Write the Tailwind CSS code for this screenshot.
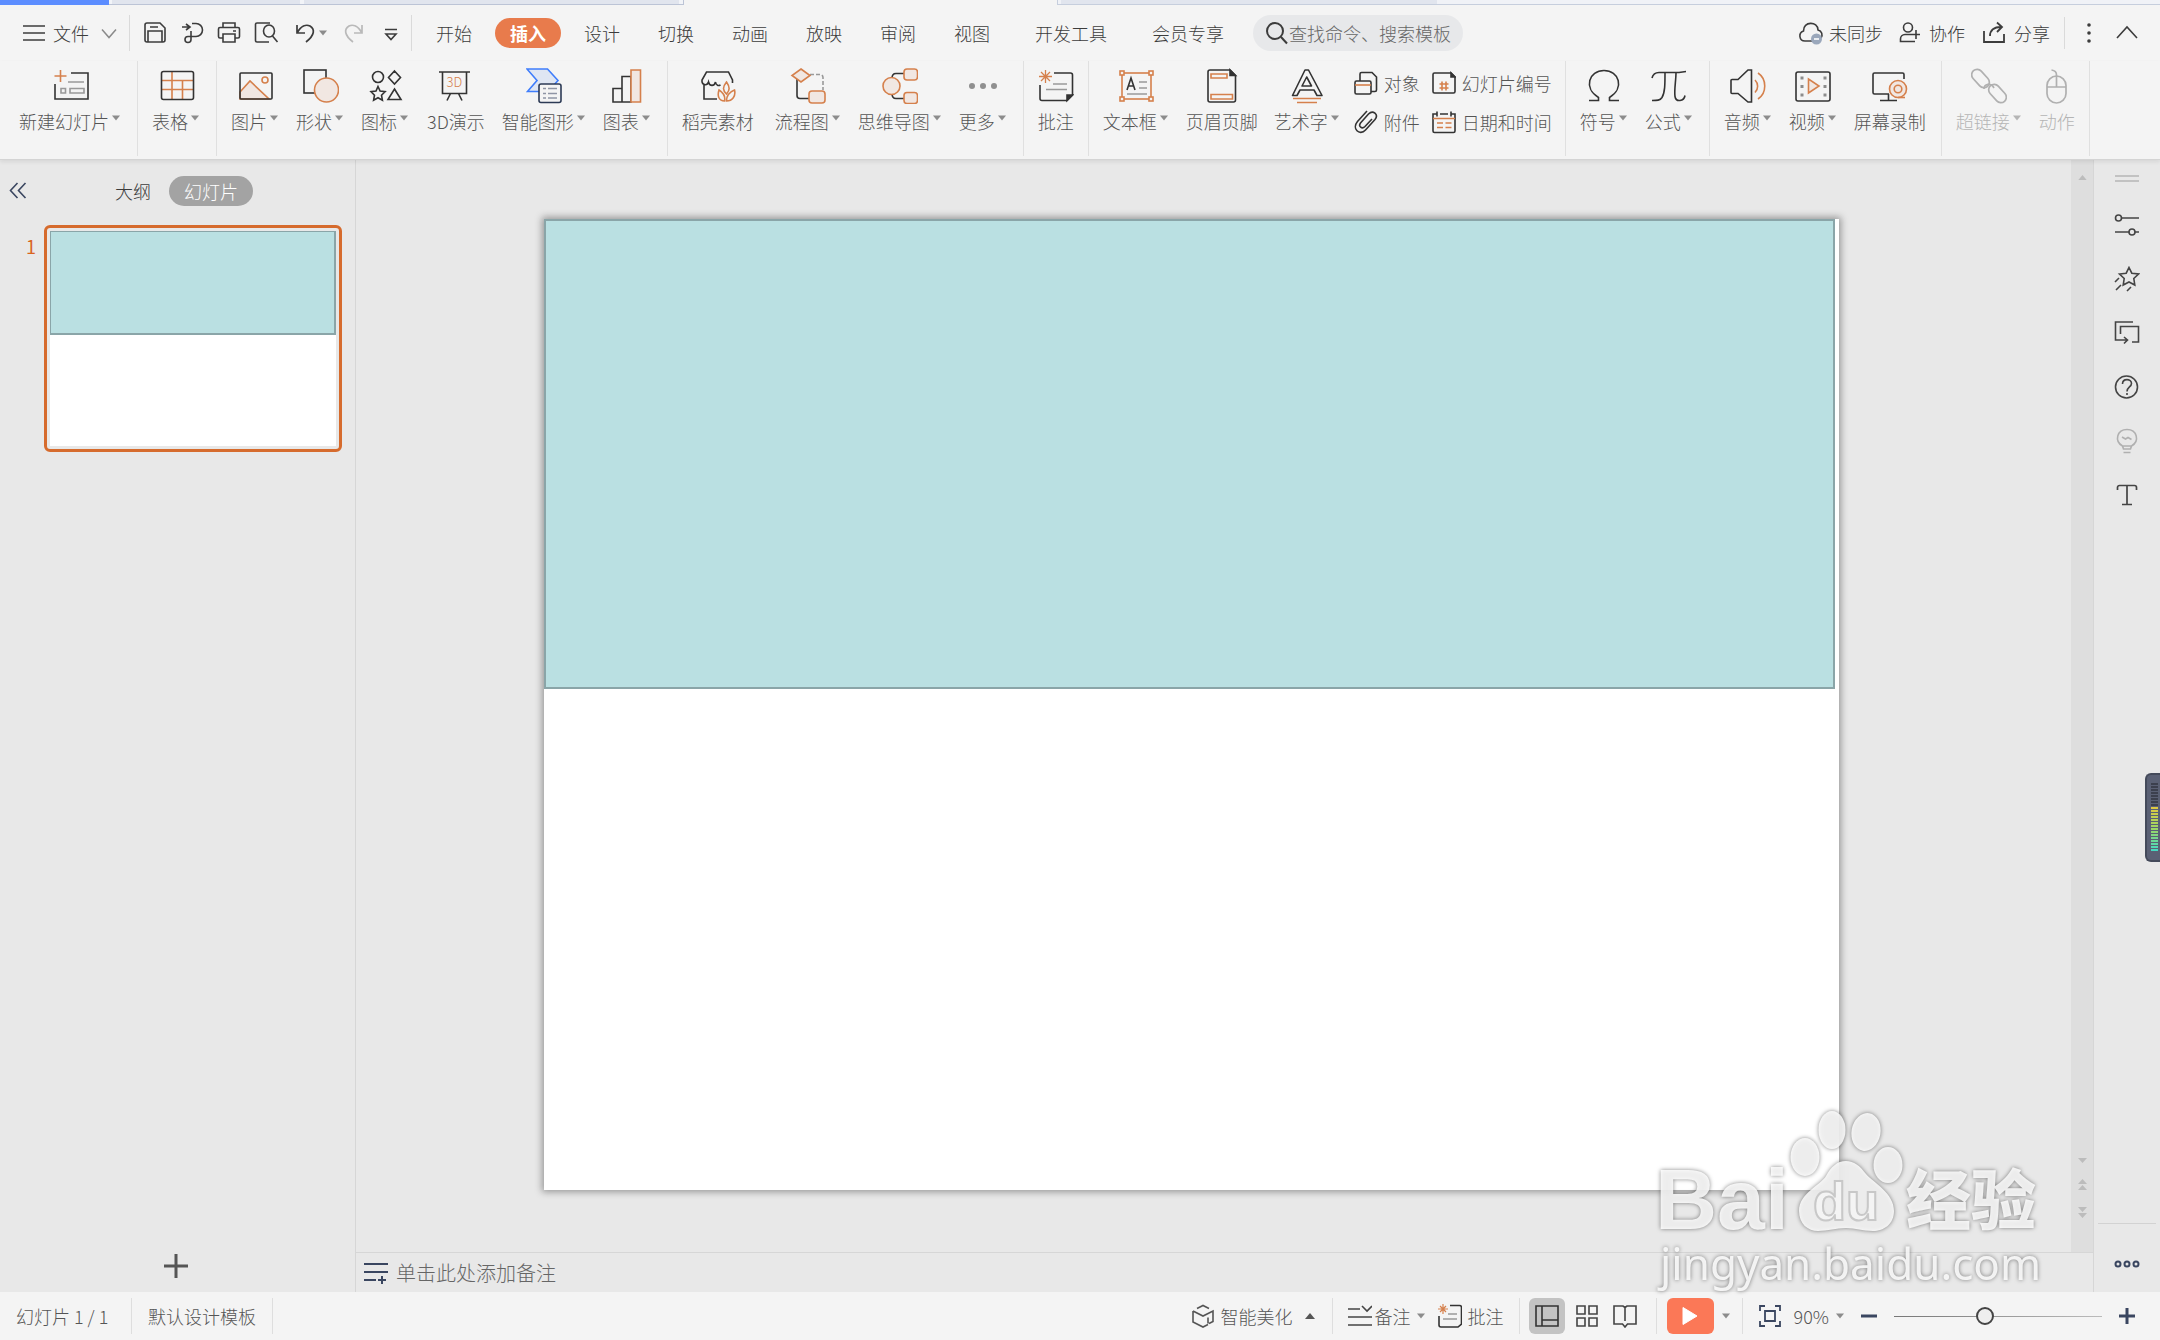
<!DOCTYPE html>
<html lang="zh-CN">
<head>
    <meta charset="UTF-8">
    <meta name="viewport" content="width=device-width, initial-scale=1.0">
    <title>演示文稿</title>
    <script src="https://cdn.jsdelivr.net/npm/@tailwindcss/browser@4"></script>
</head>
<body class="flex min-h-screen flex-col bg-[#f4f4f4] font-['Noto_Sans_CJK_SC',sans-serif] text-lg/6 font-light text-[#3c3c3c]">

    <!-- shared symbols -->
    <svg class="hidden">
        <symbol id="down" viewBox="0 0 8 6"><path d="M0 0.5h8L4 5.5z" fill="#8c8c8c"/></symbol>
        <symbol id="up" viewBox="0 0 10 6"><path d="M0 6h10L5 0z" fill="currentColor"/></symbol>
    </svg>

    <!-- document tab strip -->
    <div class="flex h-[5px] shrink-0">
        <div class="w-[109px] bg-[#5c8dff]"></div>
        <div class="flex w-[575px] gap-1 border-r border-b border-[#bcc4d6] bg-[#f2f4f8] pr-1 pl-[3px]">
            <div class="w-[188px] bg-[#e1e5ee]"></div>
            <div class="flex-1 bg-[#e1e5ee]"></div>
        </div>
        <div class="w-[373px]"></div>
        <div class="flex flex-1 border-b border-l border-[#c6cedd] bg-[#f0f2f7] pl-[3px]">
            <div class="w-[376px] bg-[#e1e5ee]"></div>
        </div>
    </div>

    <!-- menu row -->
    <header class="flex h-14 shrink-0 items-center pr-[21px] whitespace-nowrap">
        <button class="flex items-center pl-[22px]">
            <svg class="h-5 w-6" viewBox="0 0 24 20" fill="none" stroke="#3c3c3c" stroke-width="1.6"><path d="M1 3h22M1 10h22M1 17h22"/></svg>
            <span class="ml-[7px]">文件</span>
            <svg class="ml-3 h-4 w-4" viewBox="0 0 16 16" fill="none" stroke="#8a8a8a" stroke-width="1.5"><path d="M1 4.500l7 8 7-8"/></svg>
        </button>
        <div class="ml-3 flex h-9 items-center gap-[11px] border-x border-[#dadada] pr-3 pl-3">
            <button aria-label="保存"><svg class="h-6 w-[26px]" viewBox="0 0 26 24" fill="none" stroke="#3c3c3c" stroke-width="1.6"><path d="M5 2h13l5 5v12a2 2 0 0 1-2 2H5a2 2 0 0 1-2-2V4a2 2 0 0 1 2-2zM6 21V10h14v11M8 6h8"/></svg></button>
            <button aria-label="输出"><svg class="h-6 w-[26px]" viewBox="0 0 26 24" fill="none" stroke="#3c3c3c" stroke-width="1.6"><path d="M3 6h7M7 3l4 3-4 3M13 2.500h4a6 6 0 0 1 0 13H9a3 3 0 1 0 3 3V10"/></svg></button>
            <button aria-label="打印"><svg class="h-6 w-[26px]" viewBox="0 0 26 24" fill="none" stroke="#3c3c3c" stroke-width="1.6"><path d="M7 6V2h12v4M7 17H4a1.500 1.500 0 0 1-1.500-1.500V8A1.500 1.500 0 0 1 4 6.500h18A1.500 1.500 0 0 1 23.500 8v7.500A1.500 1.500 0 0 1 22 17h-3M7 13h12v8H7zM17 10h3"/></svg></button>
            <button aria-label="打印预览"><svg class="h-6 w-[26px]" viewBox="0 0 26 24" fill="none" stroke="#3c3c3c" stroke-width="1.600"><path d="M17 2H4a1.500 1.500 0 0 0-1.500 1.500v16A1.500 1.500 0 0 0 4 21h12M19.500 15l5 6"/><ellipse cx="16" cy="10" rx="5.500" ry="6"/></svg></button>
            <button class="ml-[3px] flex items-center gap-1" aria-label="撤销"><svg class="h-6 w-[26px]" viewBox="0 0 26 24" fill="none" stroke="#3c3c3c" stroke-width="1.700"><path d="M4 4v8h8M4 12C8 5 13 3 17 5c5 3 5 9-4 16"/></svg><svg class="-ml-1 h-[6px] w-2"><use href="#down"/></svg></button>
            <button class="ml-1" aria-label="恢复" disabled><svg class="h-6 w-[26px]" viewBox="0 0 26 24" fill="none" stroke="#b9b9b9" stroke-width="1.700"><path d="M20 4v8h-8M20 12C16 5 11 3 7 5c-5 3-5 9 4 16"/></svg></button>
            <button class="ml-1" aria-label="自定义"><svg class="h-6 w-4" viewBox="0 0 16 24" fill="none" stroke="#3c3c3c" stroke-width="1.600"><path d="M2 8.500h12M3 13h10l-5 5.500z"/></svg></button>
        </div>
        <nav class="ml-[5px] flex items-center">
            <button class="px-[19px]">开始</button>
            <button class="mx-1 h-[30px] rounded-full bg-[#e87b4c] px-[15px] font-bold text-white">插入</button>
            <button class="px-[19px]">设计</button>
            <button class="px-[19px]">切换</button>
            <button class="px-[19px]">动画</button>
            <button class="px-[19px]">放映</button>
            <button class="px-[19px]">审阅</button>
            <button class="px-[19px]">视图</button>
            <button class="ml-[7px] px-[19px]">开发工具</button>
            <button class="ml-[7px] px-[19px]">会员专享</button>
        </nav>
        <label class="ml-[10px] flex h-9 w-[210px] items-center rounded-full bg-[#e7e8ea] pl-3">
            <svg class="h-6 w-6 shrink-0" viewBox="0 0 24 24" fill="none" stroke="#3c3c3c" stroke-width="2"><circle cx="10" cy="10" r="8"/><path d="M16 16l6 6.500"/></svg>
            <input class="w-[170px] bg-transparent font-light outline-none placeholder:text-[#666]" type="text" placeholder="查找命令、搜索模板" aria-label="搜索">
        </label>
        <div class="ml-auto flex items-center">
            <button class="flex items-center gap-[5px]">
                <svg class="h-6 w-[26px]" viewBox="0 0 26 24" fill="none" stroke="#3c3c3c" stroke-width="1.600"><path d="M14 20H7C1 20 0 12 5.500 10 5 0 20 0 20 9c4 1 5 5 3 8"/><circle cx="18.500" cy="18" r="5.500" fill="#9aa7bb" stroke="none"/><path d="M16 18h5" stroke="#fff"/></svg>
                <span>未同步</span>
            </button>
            <button class="ml-4 flex items-center gap-2">
                <svg class="h-6 w-[22px]" viewBox="0 0 22 24" fill="none" stroke="#3c3c3c" stroke-width="1.600"><circle cx="9" cy="6.500" r="4.500"/><path d="M14 13.500H6a4.500 4.500 0 0 0-4.500 4.500v2.500H16M17 9v9M13 13.500h8"/></svg>
                <span>协作</span>
            </button>
            <button class="ml-[17px] flex items-center gap-2">
                <svg class="h-6 w-6" viewBox="0 0 24 24" fill="none" stroke="#3c3c3c" stroke-width="1.800"><path d="M2 10v11h20V13M8 15c0-6 4-9 11-9M15 1.500l5 4.500-5 5"/></svg>
                <span>分享</span>
            </button>
            <button class="ml-[14px] flex h-8 w-12 items-center justify-center border-l border-[#dadada]" aria-label="更多选项">
                <svg class="h-5 w-1" viewBox="0 0 4 20" fill="#3c3c3c"><circle cx="2" cy="2" r="1.800"/><circle cx="2" cy="10" r="1.800"/><circle cx="2" cy="18" r="1.800"/></svg>
            </button>
            <button class="ml-[3px]" aria-label="收起功能区"><svg class="h-6 w-6" viewBox="0 0 24 24" fill="none" stroke="#3c3c3c" stroke-width="1.600"><path d="M2 17L12 6l10 11"/></svg></button>
        </div>
    </header>

    <!-- ribbon -->
    <section class="relative z-10 flex h-[99px] shrink-0 border-b border-[#d4d4d4] bg-[#f4f4f4] pb-[3px] pl-[5px] whitespace-nowrap text-[#555] shadow-[0_2px_4px_rgba(0,0,0,0.08)]">
        <div class="flex items-start border-r border-[#e0e0e0] pt-[7px] pr-[7px] pl-[6px]">
            <button class="flex flex-col items-center px-2">
                <svg class="size-9" viewBox="0 0 36 36" fill="none" stroke="#333" stroke-width="1.600"><path d="M18 5h17v26H2V16"/><path d="M15 14h16M8 20.500h4.500V25H8zM17 20.500h14V25H17z" stroke="#999"/><path d="M7.500 2v12M1.500 8h12" stroke="#d5804c"/></svg>
                <span class="mt-[5px] flex items-center">新建幻灯片<svg class="mr-[2px] mb-[6px] ml-[3px] h-[6px] w-2"><use href="#down"/></svg></span>
            </button>
        </div>
        <div class="flex items-start border-r border-[#e0e0e0] pt-[7px] pr-[7px] pl-[6px]">
            <button class="flex flex-col items-center px-2">
                <svg class="size-9" viewBox="0 0 36 36" fill="none" stroke="#d5804c" stroke-width="1.600"><path d="M3 12.500h31M3 21.500h31M13 4v27M23.500 12.500V31"/><rect x="2.500" y="3.500" width="32" height="28" rx="2" stroke="#333"/></svg>
                <span class="mt-[5px] flex items-center">表格<svg class="mr-[2px] mb-[6px] ml-[3px] h-[6px] w-2"><use href="#down"/></svg></span>
            </button>
        </div>
        <div class="flex items-start border-r border-[#e0e0e0] pt-[7px] pr-[7px] pl-[6px]">
            <button class="flex flex-col items-center px-2">
                <svg class="size-9" viewBox="0 0 36 36" fill="none" stroke="#d5804c" stroke-width="1.600"><path d="M2 24L12 13l19 18H2z" fill="#f1e7e2"/><circle cx="27" cy="12" r="3"/><rect x="2" y="5" width="32" height="26" rx="1" stroke="#333"/></svg>
                <span class="mt-[5px] flex items-center">图片<svg class="mr-[2px] mb-[6px] ml-[3px] h-[6px] w-2"><use href="#down"/></svg></span>
            </button>
            <button class="flex flex-col items-center px-2">
                <svg class="size-9" viewBox="0 0 36 36" fill="none" stroke-width="1.600"><rect x="1" y="2" width="22" height="23" stroke="#333"/><circle cx="23.500" cy="22" r="12" fill="#f1e7e2" stroke="#d5804c"/></svg>
                <span class="mt-[5px] flex items-center">形状<svg class="mr-[2px] mb-[6px] ml-[3px] h-[6px] w-2"><use href="#down"/></svg></span>
            </button>
            <button class="flex flex-col items-center px-2">
                <svg class="size-9" viewBox="0 0 36 36" fill="none" stroke="#333" stroke-width="1.600"><circle cx="10" cy="9" r="5.500"/><path d="M26.500 3l6 6.500-6 6.500-6-6.500zM26.500 21l6.500 10.500H20zM10 18.500l2.100 4.600 5 .6-3.600 3.500.9 5-4.400-2.500-4.400 2.500.9-5L3 23.700l5-.6z"/></svg>
                <span class="mt-[5px] flex items-center">图标<svg class="mr-[2px] mb-[6px] ml-[3px] h-[6px] w-2"><use href="#down"/></svg></span>
            </button>
            <button class="flex flex-col items-center px-[9px]">
                <svg class="size-9" viewBox="0 0 36 36" fill="none" stroke="#333" stroke-width="1.600"><path d="M1 4h31M4.500 4v21.500h24V4M12.500 25.500L9 32.500M20.500 25.500l3.500 7"/><text x="8.500" y="19" font-size="13" fill="#d5804c" stroke="none">3D</text></svg>
                <span class="mt-[5px]">3D演示</span>
            </button>
            <button class="flex flex-col items-center px-2">
                <svg class="size-9" viewBox="0 0 36 36" fill="none" stroke-width="1.600"><path d="M1 1h20.500L32 12.500 22 23.500H1.500L11 12.500z" fill="#dfe6f3" stroke="#3f7dfb"/><rect x="13" y="16" width="22" height="18.500" rx="2" fill="#f4f4f4" stroke="#2c3a55"/><path d="M17 20.500h3M22 20.500h9M17 25.500h3M22 25.500h9M17 30h3M22 30h9" stroke="#8f95a5"/></svg>
                <span class="mt-[5px] flex items-center">智能图形<svg class="mr-[2px] mb-[6px] ml-[3px] h-[6px] w-2"><use href="#down"/></svg></span>
            </button>
            <button class="flex flex-col items-center px-2">
                <svg class="size-9" viewBox="0 0 36 36" fill="none" stroke="#333" stroke-width="1.600"><path d="M4 20.500h9V34H4zM13 8.500h9V34h-9z"/><path d="M22 2h9.500v32H22z" fill="#f1e7e2" stroke="#d5804c"/></svg>
                <span class="mt-[5px] flex items-center">图表<svg class="mr-[2px] mb-[6px] ml-[3px] h-[6px] w-2"><use href="#down"/></svg></span>
            </button>
        </div>
        <div class="flex items-start border-r border-[#e0e0e0] pt-[7px] pr-[7px] pl-[6px]">
            <button class="mr-[5px] flex flex-col items-center px-2">
                <svg class="size-9" viewBox="0 0 36 36" fill="none" stroke="#333" stroke-width="1.600"><path d="M32.500 15v-3L28.500 4h-22L2 12c-.500 5 5 6.500 6.500 2 1 4.500 6 4.500 7 0 .500 3.500 3 4 5 3M4 17v14h13"/><path d="M26.500 14c-4 5-4 8 0 12 3.500-4 3.500-7 0-12zM19 22c-2 6 0 11 5.500 11 1-4-1-8-5.500-11zM34.500 22c1.500 6-2 11-8 11 0-5 3-9 8-11z" stroke="#d5804c"/></svg>
                <span class="mt-[5px]">稻壳素材</span>
            </button>
            <button class="flex flex-col items-center px-2">
                <svg class="size-9" viewBox="0 0 36 36" fill="none" stroke-width="1.600"><path d="M7 11v16.500a3 3 0 0 0 3 3h9" stroke="#333"/><path d="M20 6.500h10a3 3 0 0 1 3 3V22" stroke="#999" stroke-dasharray="4 2"/><g fill="#f1e7e2" stroke="#d5804c"><path d="M11 1l9 6.500-9 6.500-9-6.500z"/><rect x="19" y="23" width="16" height="12" rx="3"/></g></svg>
                <span class="mt-[5px] flex items-center">流程图<svg class="mr-[2px] mb-[6px] ml-[3px] h-[6px] w-2"><use href="#down"/></svg></span>
            </button>
            <button class="flex flex-col items-center px-2">
                <svg class="size-9" viewBox="0 0 36 36" fill="none" stroke-width="1.600"><path d="M22 5.500h-8c-3 0-4 1.500-4 5M22 30.500h-8c-3 0-4-1.500-4-5" stroke="#333"/><g fill="#f1e7e2" stroke="#d5804c"><circle cx="9.500" cy="18" r="8.500"/><rect x="22" y="1" width="13.500" height="11" rx="3"/><rect x="22" y="24.500" width="13.500" height="11" rx="3"/></g></svg>
                <span class="mt-[5px] flex items-center">思维导图<svg class="mr-[2px] mb-[6px] ml-[3px] h-[6px] w-2"><use href="#down"/></svg></span>
            </button>
            <button class="flex flex-col items-center px-2">
                <svg class="size-9" viewBox="0 0 36 36" fill="#8f8f8f"><circle cx="7" cy="18" r="3"/><circle cx="18" cy="18" r="3"/><circle cx="29" cy="18" r="3"/></svg>
                <span class="mt-[5px] flex items-center">更多<svg class="mr-[2px] mb-[6px] ml-[3px] h-[6px] w-2"><use href="#down"/></svg></span>
            </button>
        </div>
        <div class="flex items-start border-r border-[#e0e0e0] px-[6px] pt-[7px]">
            <button class="flex flex-col items-center px-2">
                <svg class="size-9" viewBox="0 0 36 36" fill="none" stroke="#333" stroke-width="1.600"><path d="M16 5h16.500a2 2 0 0 1 2 2v20L29 32.500H4a2 2 0 0 1-2-2V17"/><path d="M34.500 27H29v5.500z" fill="#333"/><path d="M15 16h14M8 21.500h21" stroke="#999"/><path d="M7.500 2v13M1 8.500h13M3 4l9 9M12 4l-9 9" stroke="#d5804c" stroke-width="1.300"/></svg>
                <span class="mt-[5px]">批注</span>
            </button>
        </div>
        <div class="flex items-start border-r border-[#e0e0e0] pt-[7px] pr-[7px] pl-[6px]">
            <button class="flex flex-col items-center px-2">
                <svg class="size-9" viewBox="0 0 36 36" fill="none" stroke="#d5804c" stroke-width="1.600"><rect x="4" y="5" width="29" height="26"/><path d="M21 14h8M21 20h8M9 26h20" stroke="#999"/><path d="M9 22l4-12 4 12M10.500 18h5" stroke="#333"/><g fill="#f4f4f4"><rect x="2" y="3" width="4" height="4"/><rect x="31" y="3" width="4" height="4"/><rect x="2" y="29" width="4" height="4"/><rect x="31" y="29" width="4" height="4"/></g></svg>
                <span class="mt-[5px] flex items-center">文本框<svg class="mr-[2px] mb-[6px] ml-[3px] h-[6px] w-2"><use href="#down"/></svg></span>
            </button>
            <button class="flex flex-col items-center px-2">
                <svg class="size-9" viewBox="0 0 36 36" fill="none" stroke="#333" stroke-width="1.600"><path d="M6 2h20l5.500 5.500V32a2 2 0 0 1-2 2H6a2 2 0 0 1-2-2V4a2 2 0 0 1 2-2z"/><path d="M26 2v5.500h5.500z" fill="#333"/><path d="M7 6h16v4H7zM7 26.500h21.500V31H7z" stroke="#d5804c"/></svg>
                <span class="mt-[5px]">页眉页脚</span>
            </button>
            <button class="flex flex-col items-center px-2">
                <svg class="size-9" viewBox="0 0 36 36" fill="none" stroke="#333" stroke-width="1.600" stroke-linejoin="round"><path d="M16 2h3.500L33 27.500h-5L25 22H11l-3 5.500H3.500zM17.700 9l-4.700 9h9.500z"/><path d="M4 30.500h28M8 34.500h20" stroke="#d5804c"/></svg>
                <span class="mt-[5px] flex items-center">艺术字<svg class="mr-[2px] mb-[6px] ml-[3px] h-[6px] w-2"><use href="#down"/></svg></span>
            </button>
            <div class="grid grid-cols-[auto_auto] gap-x-3 gap-y-[15px] pt-[3px] pr-[6px] pl-[5px]">
                <button class="flex items-center gap-[6px]">
                    <svg class="size-6" viewBox="0 0 24 24" fill="none" stroke="#333" stroke-width="1.600"><path d="M6 10V3a1.500 1.500 0 0 1 1.500-1.500H18L22.500 6v13a1.500 1.500 0 0 1-1.500 1.500h-4"/><rect x="1" y="10" width="16" height="13" rx="1.500"/><path d="M1 14h16" stroke="#d5804c"/></svg>
                    <span>对象</span>
                </button>
                <button class="flex items-center gap-[6px]">
                    <svg class="size-6" viewBox="0 0 24 24" fill="none" stroke="#333" stroke-width="1.600"><path d="M3 2h16l4 4v14.500A1.500 1.500 0 0 1 21.500 22H2.500A1.500 1.500 0 0 1 1 20.500v-17A1.500 1.500 0 0 1 2.500 2z"/><path d="M19 2v4h4z" fill="#333"/><path d="M10 10.500v9M14 10.500v9M7.500 13h9M7.500 17h9" stroke="#d5804c"/></svg>
                    <span>幻灯片编号</span>
                </button>
                <button class="flex items-center gap-[6px]">
                    <svg class="size-6" viewBox="0 0 24 24" fill="none" stroke="#333" stroke-width="1.600"><path d="M13 1L3.500 11.500c-6 7 2 15 8 8.500L21 9.500c4-5-2-10-6.500-5.500L6.500 13c-2.500 3.500 1.500 6.500 4.500 3.500L18 9"/></svg>
                    <span>附件</span>
                </button>
                <button class="flex items-center gap-[6px]">
                    <svg class="size-6" viewBox="0 0 24 24" fill="none" stroke="#333" stroke-width="1.600"><path d="M5 4H1v17a1.500 1.500 0 0 0 1.500 1.500h19A1.500 1.500 0 0 0 23 21V4h-4M8 4h8M5 1.500v5M19 1.500v5"/><path d="M1 8.500h22M5 13h6M13.500 13h6M5 17.500h6M13.500 17.500h6" stroke="#d5804c"/></svg>
                    <span>日期和时间</span>
                </button>
            </div>
        </div>
        <div class="flex items-start border-r border-[#e0e0e0] pt-[7px] pr-[7px] pl-[6px]">
            <button class="flex flex-col items-center px-2">
                <svg class="size-9" viewBox="0 0 36 36" fill="none" stroke="#333" stroke-width="1.600"><path d="M3 32.500h9.500v-3C-3 20 3 2.500 18 2.500S39 20 23.500 29.500v3H33"/></svg>
                <span class="mt-[5px] flex items-center">符号<svg class="mr-[2px] mb-[6px] ml-[3px] h-[6px] w-2"><use href="#down"/></svg></span>
            </button>
            <button class="flex flex-col items-center px-2">
                <svg class="size-9" viewBox="0 0 36 36" fill="none" stroke="#333" stroke-width="1.600"><path d="M1 10c1-4 3-5.500 7-5.500h20l7-1M14 4.500c0 12 0 20-3 25-2 3-5 3-10 3M25 4.500c0 8-2 18-1 24 1 6 9 5 10-1"/></svg>
                <span class="mt-[5px] flex items-center">公式<svg class="mr-[2px] mb-[6px] ml-[3px] h-[6px] w-2"><use href="#down"/></svg></span>
            </button>
        </div>
        <div class="flex items-start border-r border-[#e0e0e0] pt-[7px] pr-[7px] pl-[6px]">
            <button class="flex flex-col items-center px-2">
                <svg class="size-9" viewBox="0 0 36 36" fill="none" stroke="#333" stroke-width="1.600"><path d="M1 12.500a1 1 0 0 1 1-1h6L18 2h3.500v32H18L8 25.500H2a1 1 0 0 1-1-1z"/><path d="M25 12c3.500 3.500 3.500 9 0 12.500M28 5c9 6 9 20 0 26" stroke="#d5804c"/></svg>
                <span class="mt-[5px] flex items-center">音频<svg class="mr-[2px] mb-[6px] ml-[3px] h-[6px] w-2"><use href="#down"/></svg></span>
            </button>
            <button class="flex flex-col items-center px-2">
                <svg class="size-9" viewBox="0 0 36 36" fill="none" stroke="#333" stroke-width="1.600"><rect x="1" y="4" width="34" height="29" rx="2"/><path d="M13.500 11v14L24 18z" fill="#f1e7e2" stroke="#d5804c"/><path d="M7 8.500v20M30 8.500v20" stroke="#8c8c8c" stroke-width="3" stroke-dasharray="3 5.500"/></svg>
                <span class="mt-[5px] flex items-center">视频<svg class="mr-[2px] mb-[6px] ml-[3px] h-[6px] w-2"><use href="#down"/></svg></span>
            </button>
            <button class="flex flex-col items-center px-2">
                <svg class="size-9" viewBox="0 0 36 36" fill="none" stroke="#333" stroke-width="1.600"><path d="M32 11V6.500a1.500 1.500 0 0 0-1.500-1.500h-28A1.500 1.500 0 0 0 1 6.500v18A1.500 1.500 0 0 0 2.500 26H17M8 32.500h17M16.500 26v6"/><circle cx="26" cy="21" r="8.500" fill="#f1e7e2" stroke="#d5804c"/><circle cx="26" cy="21" r="3.800" stroke="#d5804c"/><path d="M26 29.500h7" stroke="#d5804c"/></svg>
                <span class="mt-[5px]">屏幕录制</span>
            </button>
        </div>
        <div class="flex items-start border-r border-[#e0e0e0] px-[6px] pt-[7px] text-[#b4b4b4]">
            <button class="flex flex-col items-center px-2" disabled>
                <svg class="size-9" viewBox="0 0 36 36" fill="none" stroke="#b0b0b0" stroke-width="1.700"><rect x="-1" y="5" width="21" height="11" rx="5.500" transform="rotate(48 9.500 10.500)"/><rect x="16" y="20" width="21" height="11" rx="5.500" transform="rotate(48 26.500 25.500)"/><path d="M13 21c0-5 7-7 10-1"/></svg>
                <span class="mt-[5px] flex items-center">超链接<svg class="mr-[2px] mb-[6px] ml-[3px] h-[6px] w-2 opacity-60"><use href="#down"/></svg></span>
            </button>
            <button class="flex flex-col items-center px-2" disabled>
                <svg class="size-9" viewBox="0 0 36 36" fill="none" stroke="#b0b0b0" stroke-width="1.700"><rect x="8" y="8" width="19" height="27" rx="9.500"/><path d="M8 19h19M17.500 19V7c0-3-1-4.500-5-5"/></svg>
                <span class="mt-[5px]">动作</span>
            </button>
        </div>
    </section>

    <main class="flex min-h-0 flex-1 bg-[#e8e8e8]">
        <!-- slide list -->
        <aside class="flex w-[356px] shrink-0 flex-col border-r border-[#d6d6d6] pr-[3px]">
            <div class="flex items-center pt-4 pl-2">
                <button aria-label="收起"><svg class="size-5" viewBox="0 0 20 20" fill="none" stroke="#3a4660" stroke-width="1.600"><path d="M9.500 2l-7 7.500 7 7.500M17.500 2l-7 7.500 7 7.500"/></svg></button>
                <button class="ml-[87px]">大纲</button>
                <button class="ml-[18px] h-[30px] rounded-full bg-[#a3a3a3] px-[15px] text-white">幻灯片</button>
            </div>
            <div class="flex pt-[19px] pr-[10px]">
                <span class="w-11 pt-[9px] pr-2 text-right font-normal text-[#d9641e]">1</span>
                <div class="flex-1 rounded-md border-3 border-[#d66b2d] p-[3px]">
                    <div class="h-[215px] bg-white">
                        <div class="h-[48.300%] border border-r-2 border-b-2 border-[#8aa5a8] bg-[#bae0e2]"></div>
                    </div>
                </div>
            </div>
            <button class="mx-auto mt-auto mb-[14px]" aria-label="新建幻灯片"><svg class="size-6" viewBox="0 0 24 24" fill="none" stroke="#555" stroke-width="3"><path d="M12 0v24M0 12h24"/></svg></button>
        </aside>

        <div class="flex min-w-0 flex-1 flex-col">
            <div class="flex flex-1">
                <!-- current slide -->
                <div class="flex-1 pt-[59px] pr-[232px] pb-[59px] pl-[188px]">
                    <div class="aspect-[4/3] w-full bg-white shadow-[0_0_7px_2px_rgba(0,0,0,0.35)]">
                        <div class="h-[48.400%] w-[99.700%] border-2 border-[#8aa5a8] bg-[#bae0e2]"></div>
                    </div>
                </div>
                <div class="flex w-[22px] flex-col items-center bg-[#dedede] pt-[15px] text-[#bcbcbc]">
                    <svg class="h-[5px] w-[9px]"><use href="#up"/></svg>
                    <div class="mt-auto flex flex-col items-center gap-4 pb-[33px]">
                        <svg class="h-[5px] w-[9px]" viewBox="0 0 9 5" fill="currentColor"><path d="M0 0h9L4.500 5z"/></svg>
                        <svg class="h-3 w-[9px]" viewBox="0 0 9 12" fill="currentColor"><path d="M0 5h9L4.500 0zM0 11h9L4.500 6z"/></svg>
                        <svg class="h-3 w-[9px]" viewBox="0 0 9 12" fill="currentColor"><path d="M0 0h9L4.500 5zM0 6h9L4.500 11z"/></svg>
                    </div>
                </div>
            </div>
            <label class="flex h-10 shrink-0 items-center border-t border-[#d6d6d6] pl-[7px]">
                <svg class="h-6 w-[26px]" viewBox="0 0 26 24" fill="none" stroke="#3a4660" stroke-width="2"><path d="M1 3h24M1 11h24M1 19h12M15 19h8M19 15v8"/></svg>
                <input class="ml-[7px] flex-1 bg-transparent text-xl/6 font-light outline-none placeholder:text-[#666]" type="text" placeholder="单击此处添加备注" aria-label="备注">
            </label>
        </div>

        <!-- task pane bar -->
        <aside class="flex w-[67px] shrink-0 flex-col items-center border-l border-[#d6d6d6] px-1">
            <div class="mt-[15px] h-[7px] w-6 border-y-2 border-[#c2c2c2]"></div>
            <div class="flex flex-col items-center gap-7 pt-[30px]">
                <button aria-label="属性"><svg class="block size-[26px]" viewBox="0 0 26 26" fill="none" stroke="#444" stroke-width="1.600"><circle cx="4.500" cy="6" r="3"/><path d="M7.500 6H25M1 20h14M21 20h4"/><circle cx="18" cy="20" r="3"/></svg></button>
                <button aria-label="动画"><svg class="block size-[26px]" viewBox="0 0 26 26" fill="none" stroke="#444" stroke-width="1.600"><path d="M15 1.500l2.800 5.700 6.700.8-4.700 4.500 1 6.500-5.800-3-5.800 3 1-6.500L5.500 8l6.700-.800zM5 12l-4 4M7 19l-5 5M17 21l-4 4"/></svg></button>
                <button aria-label="切换"><svg class="block size-[26px]" viewBox="0 0 26 26" fill="none" stroke="#444" stroke-width="1.600"><path d="M19 2H1.500v18H13M10 17l3.500 3-3.500 3.500M6.500 14V6.500h18V22H18"/></svg></button>
                <button aria-label="帮助"><svg class="block size-[26px]" viewBox="0 0 26 26" fill="none" stroke="#444" stroke-width="1.600"><circle cx="12.500" cy="13" r="11"/><path d="M8.500 10c0-6 9-5.500 9-.500 0 3.500-4.500 3.500-4.500 8M13 19v2"/></svg></button>
                <button aria-label="提示"><svg class="block size-[26px]" viewBox="0 0 26 26" fill="none" stroke="#b0b0b0" stroke-width="1.600"><path d="M8.500 18C0 13 3 1.500 13 1.500S26 13 17.500 18zM8.500 18l1 3h7l1-3M9.500 24.500h7M8 9l3.500 2 2.500-1.500 3.500 2"/></svg></button>
                <button aria-label="文字"><svg class="block size-[26px]" viewBox="0 0 26 26" fill="none" stroke="#444" stroke-width="1.700"><path d="M3.500 8V5.500a2 2 0 0 1 2-2h15a2 2 0 0 1 2 2V8M13 3.500v19M8 22.500h10"/></svg></button>
            </div>
            <div class="mt-auto flex h-[69px] w-full justify-center border-t border-[#d2d2d2] pt-3">
                <button aria-label="更多"><svg class="h-[10px] w-[26px]" viewBox="0 0 26 10" fill="none" stroke="#3a4660" stroke-width="2"><circle cx="4" cy="5" r="2.500"/><circle cx="13" cy="5" r="2.500"/><circle cx="22" cy="5" r="2.500"/></svg></button>
            </div>
        </aside>
    </main>

    <!-- status bar -->
    <footer class="flex h-12 shrink-0 items-center pr-[25px] whitespace-nowrap text-[#555]">
        <div class="flex h-9 w-[132px] items-center border-r border-[#dedede] pl-4">幻灯片 1 / 1</div>
        <div class="flex h-9 items-center border-r border-[#dedede] px-4">默认设计模板</div>
        <div class="ml-auto flex h-9 items-center">
            <button class="flex h-9 items-center border-r border-[#dedede] pr-[17px]">
                <svg class="size-6" viewBox="0 0 24 24" fill="none" stroke="#555" stroke-width="1.600"><path d="M6 4.500l6-3 6 3M2 7v11l10 5 5-2.500M2 7l10 5 10-5v10.500l-4 2M17 13.500v6"/></svg>
                <span class="mx-[6px]">智能美化</span>
                <svg class="ml-[6px] h-[6px] w-[10px]" viewBox="0 0 10 6"><use href="#up"/></svg>
            </button>
            <button class="ml-[15px] flex items-center">
                <svg class="h-6 w-6" viewBox="0 0 24 24" fill="none" stroke="#444" stroke-width="1.600"><path d="M0 5h12M0 13h24M0 21h24M14 2l5 5 5-5"/></svg>
                <span class="ml-[3px]">备注</span>
                <svg class="ml-[6px] h-[6px] w-2"><use href="#down"/></svg>
            </button>
            <button class="ml-[13px] flex h-9 items-center gap-[6px] border-r border-[#dedede] pr-[15px]">
                <svg class="size-6" viewBox="0 0 24 24" fill="none" stroke="#333" stroke-width="1.600"><path d="M12 1.500h9.500a2 2 0 0 1 2 2V20L20 23H3a2 2 0 0 1-2-2V12"/><path d="M10 10h9M5 15h14" stroke="#999"/><path d="M5 0v10M0 5h10M2 2l6 6M8 2L2 8" stroke="#d5804c" stroke-width="1.200"/></svg>
                <span>批注</span>
            </button>
            <div class="ml-[9px] flex h-9 items-center border-r border-[#dedede] pr-[19px]">
                <button class="flex h-9 w-9 items-center justify-center rounded-md bg-[#c3c3c3]" aria-label="普通视图"><svg class="size-6" viewBox="0 0 24 24" fill="none" stroke="#333" stroke-width="1.600"><path d="M1 2h22v20H1zM7 2v20M7 16h16"/></svg></button>
                <button class="ml-[10px]" aria-label="幻灯片浏览"><svg class="size-6" viewBox="0 0 24 24" fill="none" stroke="#444" stroke-width="1.600"><path d="M2 2h8v8H2zM14 2h8v8h-8zM2 14h8v8H2zM14 14h8v8h-8z"/></svg></button>
                <button class="ml-[14px]" aria-label="阅读视图"><svg class="size-6" viewBox="0 0 24 24" fill="none" stroke="#444" stroke-width="1.600"><path d="M1 2h9l2 1.500L14 2h9v18h-8.500L12 23l-2.500-3H1zM12 4v13"/></svg></button>
            </div>
            <div class="flex h-9 items-center border-r border-[#dedede] pr-3 pl-[10px]">
                <button class="flex h-9 w-[47px] items-center justify-center rounded-md bg-[#fb7857]" aria-label="放映"><svg class="h-5 w-4" viewBox="0 0 16 20"><path d="M1 1.500v17L15 10z" fill="#fff" stroke="#fff" stroke-linejoin="round"/></svg></button>
                <svg class="ml-2 h-[6px] w-2"><use href="#down"/></svg>
            </div>
            <button class="ml-[15px]" aria-label="适应窗口"><svg class="size-6" viewBox="0 0 24 24" fill="none" stroke="#3a4660" stroke-width="1.800"><path d="M2 7V2h5M17 2h5v5M22 17v5h-5M7 22H2v-5M7 7h10v10H7z"/></svg></button>
            <button class="ml-3 flex items-center gap-[7px]">90%<svg class="h-[6px] w-2"><use href="#down"/></svg></button>
            <button class="ml-[17px]" aria-label="缩小"><svg class="size-4" viewBox="0 0 16 16" stroke="#3a4660" stroke-width="3"><path d="M0 8h16"/></svg></button>
            <input class="ml-[17px] h-5 w-[208px] appearance-none bg-linear-to-r from-[#777] to-[#bbb] bg-[length:100%_1px] bg-center bg-no-repeat [&::-webkit-slider-thumb]:size-[18px] [&::-webkit-slider-thumb]:appearance-none [&::-webkit-slider-thumb]:rounded-full [&::-webkit-slider-thumb]:border-2 [&::-webkit-slider-thumb]:border-[#444] [&::-webkit-slider-thumb]:bg-[#eee]" type="range" min="0" max="200" value="86" aria-label="缩放">
            <button class="ml-[17px]" aria-label="放大"><svg class="size-4" viewBox="0 0 16 16" stroke="#3a4660" stroke-width="3"><path d="M0 8h16M8 0v16"/></svg></button>
        </div>
    </footer>

    <!-- level meter docked to the window edge -->
    <div class="absolute top-[773px] right-0 z-20 h-[89px] w-[15px] rounded-l-md border-2 border-r-0 border-[#444a5a] bg-[#5a6074] pt-2 pl-1">
        <div class="h-6 w-[7px] bg-[repeating-linear-gradient(#3c404e_0_2px,#5a6074_2px_3px)]"></div>
        <svg class="h-[45px] w-[7px]" viewBox="0 0 7 45" fill="none">
            <linearGradient id="level" x1="0" y1="0" x2="0" y2="45" gradientUnits="userSpaceOnUse"><stop stop-color="#e0c840"/><stop offset=".5" stop-color="#98d868"/><stop offset="1" stop-color="#40d8c8"/></linearGradient>
            <path d="M3.500 0v45" stroke="url(#level)" stroke-width="7" stroke-dasharray="2 1"/>
        </svg>
    </div>

    <!-- watermark -->
    <svg class="pointer-events-none absolute right-[100px] bottom-[40px] z-20 h-[200px] w-[410px] drop-shadow-[0_0_2px_rgba(0,0,0,0.55)]" viewBox="0 0 410 200" fill="#fff" fill-opacity=".85">
        <ellipse cx="155" cy="57" rx="14.500" ry="19"/>
        <ellipse cx="182" cy="30" rx="13.500" ry="19"/>
        <ellipse cx="216" cy="32" rx="14.500" ry="19" transform="rotate(10 216 32)"/>
        <ellipse cx="238" cy="65" rx="14.500" ry="18"/>
        <path d="M196 61c-9 0-15 6-20 15s-27 17-27 35c0 13 9 20 19 20s18-3 28-3 16 3 27 3 21-7 21-20c0-18-20-28-28-37-6-8-12-13-20-13z"/>
        <g font-family="'Liberation Sans', sans-serif" font-weight="700">
            <text x="5" y="129" font-size="86">Bai</text>
            <text x="163" y="120" font-size="54" fill="#f6f6f6" stroke="#c8c8c8" stroke-width="2">du</text>
        </g>
        <text x="256" y="124" font-size="65" font-weight="900" font-family="'Noto Sans CJK SC', sans-serif">经验</text>
        <text x="10" y="180" font-size="44" font-weight="400" font-family="'Noto Sans', sans-serif">jingyan.baidu.com</text>
    </svg>

</body>
</html>
